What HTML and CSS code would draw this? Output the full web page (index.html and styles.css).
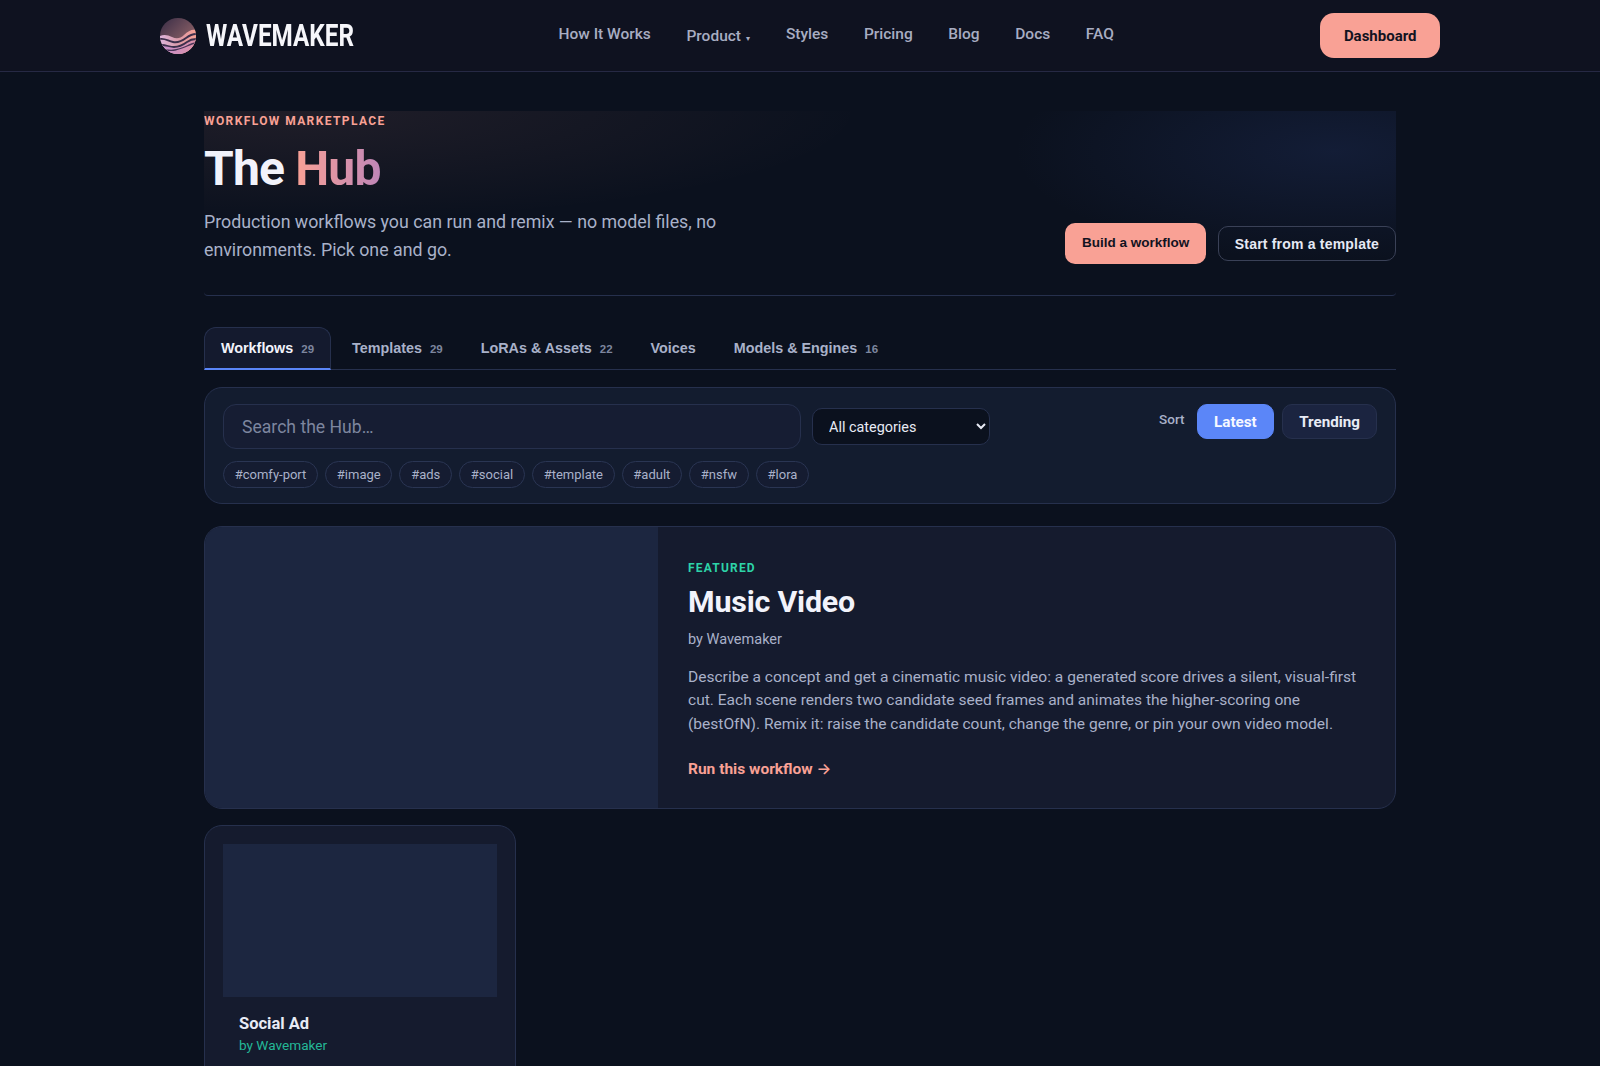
FILE: index.html
```html
<!DOCTYPE html>
<html lang="en">
<head>
  <meta charset="UTF-8" />
  <meta name="viewport" content="width=device-width, initial-scale=1.0"/>
  <title>The Hub - Wavemaker</title>
  <link rel="stylesheet" href="styles.css">
</head>
<body>
  <header class="site-header">
    <div class="header-inner">
      <a class="brand" href="#">
        <svg class="brand-mark" width="36" height="36" viewBox="0 0 36 36" aria-hidden="true">
          <defs>
            <clipPath id="disc"><circle cx="18" cy="18" r="18"/></clipPath>
            <linearGradient id="sky" x1="0.2" y1="0" x2="0.9" y2="0.7">
              <stop offset="0" stop-color="#43334a"/>
              <stop offset="1" stop-color="#94666a"/>
            </linearGradient>
            <linearGradient id="wave" x1="0" y1="0" x2="1" y2="0">
              <stop offset="0" stop-color="#dcb4dc"/>
              <stop offset="0.55" stop-color="#dc9aa6"/>
              <stop offset="1" stop-color="#f9a195"/>
            </linearGradient>
            <linearGradient id="wave2" x1="0" y1="0" x2="1" y2="0">
              <stop offset="0" stop-color="#c48fd0"/>
              <stop offset="1" stop-color="#dc90a6"/>
            </linearGradient>
          </defs>
          <g clip-path="url(#disc)">
            <rect width="36" height="36" fill="url(#sky)"/>
            <path d="M0 18c4-2 8-1 12 1s8 2 12-2 8-6 12-5v24H0z" fill="url(#wave)"/>
            <path d="M0 21c5-1 8 2 13 3s9-1 13-4 7-4 10-4" fill="none" stroke="#3c2f4c" stroke-width="1.8"/>
            <path d="M0 27c5-1 9 2 14 2s9-2 13-5 6-3 9-3v15H0z" fill="url(#wave2)"/>
            <path d="M2 27c4 0 8 2 12 2s9-2 13-5 6-3 9-3" fill="none" stroke="#3c2f4c" stroke-width="1.8"/>
            <path d="M4 32c4 0 7 1 11 0s8-2 12-4 6-3 9-3" fill="none" stroke="#4a3558" stroke-width="1.3"/>
          </g>
        </svg>
        <span class="brand-name">WAVEMAKER</span>
      </a>
      <nav class="main-nav">
        <a href="#">How It Works</a>
        <button class="nav-drop" type="button">Product <span class="caret">▾</span></button>
        <a href="#">Styles</a>
        <a href="#">Pricing</a>
        <a href="#">Blog</a>
        <a href="#">Docs</a>
        <a href="#">FAQ</a>
      </nav>
      <a class="btn-dashboard" href="#">Dashboard</a>
    </div>
  </header>

  <main class="hub">
    <section class="hero">
      <div class="hero-copy">
        <div class="eyebrow">WORKFLOW MARKETPLACE</div>
        <h1>The <span class="accent">Hub</span></h1>
        <p>Production workflows you can run and remix — no model files, no environments. Pick one and go.</p>
      </div>
      <div class="hero-actions">
        <button class="btn-primary" type="button">Build a workflow</button>
        <button class="btn-ghost" type="button">Start from a template</button>
      </div>
    </section>

    <div class="tabs">
      <button class="tab active" type="button">Workflows <span class="count">29</span></button>
      <button class="tab" type="button">Templates <span class="count">29</span></button>
      <button class="tab" type="button">LoRAs &amp; Assets <span class="count">22</span></button>
      <button class="tab" type="button">Voices</button>
      <button class="tab" type="button">Models &amp; Engines <span class="count">16</span></button>
    </div>

    <section class="filters">
      <div class="filters-top">
        <div class="search-row">
          <input class="search" type="text" placeholder="Search the Hub…" />
          <select class="category">
            <option>All categories</option>
          </select>
        </div>
        <div class="sort">
          <span class="sort-label">Sort</span>
          <button class="sort-btn on" type="button">Latest</button>
          <button class="sort-btn" type="button">Trending</button>
        </div>
      </div>
      <div class="tags">
        <a class="tag" href="#">#comfy-port</a>
        <a class="tag" href="#">#image</a>
        <a class="tag" href="#">#ads</a>
        <a class="tag" href="#">#social</a>
        <a class="tag" href="#">#template</a>
        <a class="tag" href="#">#adult</a>
        <a class="tag" href="#">#nsfw</a>
        <a class="tag" href="#">#lora</a>
      </div>
    </section>

    <section class="featured">
      <div class="featured-media"></div>
      <div class="featured-body">
        <div class="featured-label">FEATURED</div>
        <h2>Music Video</h2>
        <div class="featured-by">by Wavemaker</div>
        <p>Describe a concept and get a cinematic music video: a generated score drives a silent, visual-first cut. Each scene renders two candidate seed frames and animates the higher-scoring one (bestOfN). Remix it: raise the candidate count, change the genre, or pin your own video model.</p>
        <a class="run-link" href="#">Run this workflow <span class="arrow">→</span></a>
      </div>
    </section>

    <div class="card-grid">
      <article class="card">
        <div class="card-media"></div>
        <div class="card-body">
          <h3>Social Ad</h3>
          <div class="card-by">by Wavemaker</div>
        </div>
      </article>
    </div>
  </main>
</body>
</html>
```

FILE: styles.css
```css
* {
  box-sizing: border-box;
}

html, body {
  height: 100vh;
  overflow: hidden;
}

body {
  margin: 0;
  font-family: Roboto, sans-serif;
  background: #0b111e;
  color: #e8ebf5;
}

a {
  text-decoration: none;
  color: inherit;
}

/* Header */
.site-header {
  height: 72px;
  background: #0f1220;
  border-bottom: 1px solid #262944;
}

.header-inner {
  max-width: 1280px;
  height: 100%;
  margin: 0 auto;
  display: flex;
  align-items: center;
  justify-content: space-between;
}

.brand {
  display: flex;
  align-items: center;
  gap: 10px;
}

.brand-name {
  display: inline-block;
  font-size: 31px;
  font-weight: 700;
  color: #f6f6fa;
  transform: scaleX(0.783);
  transform-origin: left center;
  width: 148px;
  white-space: nowrap;
}

.main-nav {
  display: flex;
  align-items: center;
  gap: 35.6px;
  margin-left: -2px;
  color: #a8adc2;
  font-size: 15.5px;
  font-weight: 500;
}

.main-nav a {
  position: relative;
  top: -2px;
}

.nav-drop {
  font: inherit;
  color: inherit;
  background: none;
  border: 0;
  padding: 0;
}

.caret {
  margin-left: 1.5px;
  font-size: 8px;
}

.btn-dashboard {
  display: flex;
  align-items: center;
  height: 45px;
  padding: 0 23.5px;
  border-radius: 14px;
  background: #f9a195;
  color: #12131f;
  font-size: 15px;
  font-weight: 700;
}

/* Page */
.hub {
  width: 1192px;
  margin: 0 auto;
  padding-top: 39px;
}

.hero {
  display: flex;
  justify-content: space-between;
  align-items: flex-end;
  height: 185px;
  padding-bottom: 31px;
  border-bottom: 1px solid #26304d;
  border-radius: 0 0 4px 4px;
  background:
    radial-gradient(ellipse 560px 110px at 100px 0, rgba(249, 161, 149, 0.085), transparent),
    radial-gradient(ellipse 320px 110px at 1130px 40px, rgba(60, 90, 180, 0.16), transparent);
}

.eyebrow {
  position: relative;
  top: -4px;
  font-size: 12px;
  font-weight: 700;
  letter-spacing: 1.4px;
  color: #f9a195;
  line-height: 18px;
}

h1 {
  margin: 5px 0 9px;
  font-size: 48px;
  font-weight: 700;
  line-height: 60px;
  letter-spacing: -0.8px;
  color: #f2f3fb;
}

.accent {
  background: linear-gradient(90deg, #f9a195, #bf86b8);
  -webkit-background-clip: text;
  background-clip: text;
  color: transparent;
}

.hero-copy p {
  margin: 0;
  max-width: 540px;
  font-size: 17.8px;
  line-height: 28px;
  color: #a9b1c9;
}

.hero-actions {
  display: flex;
  align-items: center;
  gap: 11.5px;
}

.btn-primary {
  height: 41px;
  padding: 0 17px 2px;
  border: 0;
  border-radius: 10px;
  background: #f9a195;
  color: #12131f;
  font-family: "Liberation Sans", sans-serif;
  font-size: 13.5px;
  font-weight: 700;
}

.btn-ghost {
  height: 35px;
  padding: 0 16px;
  border: 1px solid #3a4157;
  border-radius: 10px;
  background: transparent;
  color: #e6e9f4;
  font-family: "Liberation Sans", sans-serif;
  font-size: 14px;
  font-weight: 700;
  letter-spacing: 0.2px;
}

/* Tabs */
.tabs {
  display: flex;
  gap: 4px;
  margin-top: 31px;
  border-bottom: 1px solid #26304d;
}

.tab {
  height: 43px;
  margin-bottom: -1px;
  padding: 0 16px;
  border: 1px solid transparent;
  border-bottom-width: 2px;
  border-radius: 12px 12px 0 0;
  background: transparent;
  color: #a9b1c9;
  font-family: "Liberation Sans", sans-serif;
  font-size: 14.35px;
  font-weight: 700;
  white-space: nowrap;
}

.tab.active {
  background: #141a2e;
  border-color: #26304d;
  border-bottom-color: #5b86f8;
  color: #f2f3fb;
}

.count {
  margin-left: 4px;
  font-size: 11.5px;
  color: #7d869f;
}

/* Filters */
.filters {
  margin-top: 17px;
  height: 117px;
  padding: 16px 18px;
  background: #131c2f;
  border: 1px solid #26304d;
  border-radius: 18px;
}

.filters-top {
  display: flex;
  justify-content: space-between;
  align-items: flex-start;
}

.search-row {
  display: flex;
  align-items: center;
  gap: 11px;
}

.search {
  width: 578px;
  height: 45px;
  padding: 0 18px;
  border: 1px solid #26304d;
  border-radius: 13px;
  background: #161d33;
  color: #e8ebf5;
  font-family: inherit;
  font-size: 17.6px;
}

.search::placeholder {
  color: #7d869f;
}

.category {
  width: 178px;
  height: 37px;
  padding: 1px 12px 0;
  border: 1px solid #26304d;
  border-radius: 10px;
  background: #0b111e;
  color: #e8ebf5;
  font-family: inherit;
  font-size: 14.4px;
}

.sort {
  display: flex;
  align-items: center;
  gap: 8.5px;
}

.sort-label {
  margin-right: 4px;
  margin-top: -6px;
  font-size: 13.5px;
  font-weight: 500;
  color: #a9b1c9;
}

.sort-btn {
  height: 35px;
  padding: 0 16px;
  border: 1px solid #26304d;
  border-radius: 10px;
  background: #1b2440;
  color: #e8ebf5;
  font-family: inherit;
  font-size: 15.2px;
  font-weight: 700;
}

.sort-btn.on {
  background: #5b86f8;
  border-color: #5b86f8;
  color: #f6f8ff;
}

.tags {
  display: flex;
  gap: 7px;
  margin-top: 12px;
}

.tag {
  height: 27px;
  padding: 0 10.75px;
  display: flex;
  align-items: center;
  border: 1px solid #2a3553;
  border-radius: 14px;
  background: #151c31;
  color: #a9b1c9;
  font-size: 13px;
}

/* Featured */
.featured {
  display: grid;
  grid-template-columns: 453px 1fr;
  height: 283px;
  margin-top: 22px;
  background: #151b2e;
  border: 1px solid #26304d;
  border-radius: 18px;
  overflow: hidden;
}

.featured-media {
  background: #1c2640;
}

.featured-body {
  padding: 33px 30px;
}

.featured-label {
  font-size: 12px;
  font-weight: 700;
  letter-spacing: 1.2px;
  line-height: 16px;
  color: #2dd4a8;
}

.featured-body h2 {
  margin: 6px 0 8px;
  font-size: 30.4px;
  font-weight: 700;
  line-height: 40px;
  letter-spacing: -0.2px;
  color: #f2f3fb;
}

.featured-by {
  font-size: 14.5px;
  line-height: 20px;
  color: #a9b1c9;
}

.featured-body p {
  margin: 16px 0 23px;
  font-size: 15.55px;
  line-height: 23.4px;
  color: #a9b1c9;
}

.run-link {
  font-size: 15.5px;
  font-weight: 700;
  color: #f9a195;
}

.arrow {
  font-family: Inter, sans-serif;
  font-weight: 600;
}

/* Cards */
.card-grid {
  display: grid;
  grid-template-columns: repeat(3, 312px);
  margin-top: 16px;
}

.card {
  height: 300px;
  padding: 18px;
  background: #151b2e;
  border: 1px solid #26304d;
  border-radius: 18px;
}

.card-media {
  height: 153px;
  background: #1c2640;
}

.card-body {
  padding: 16px;
}

.card-body h3 {
  margin: 0;
  font-size: 16.5px;
  font-weight: 700;
  line-height: 22px;
  color: #e8ebf5;
}

.card-by {
  font-size: 13.6px;
  line-height: 20px;
  color: #24b897;
}
```
